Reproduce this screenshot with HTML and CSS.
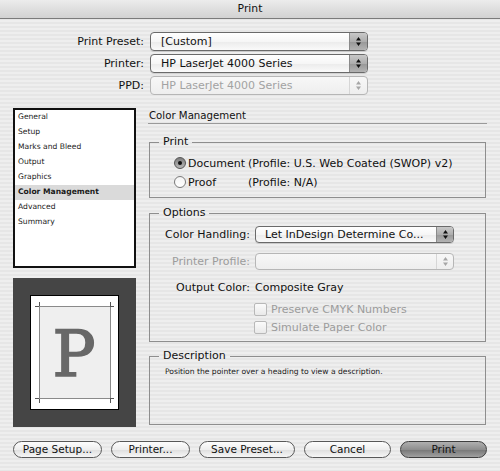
FILE: index.html
```html
<!DOCTYPE html>
<html>
<head>
<meta charset="utf-8">
<link rel="stylesheet" href="styles.css">
</head>
<body>
<div class="titlebar">Print</div>

<div class="presets">
  <div class="plabel">Print Preset:</div>
  <div class="select"><span class="sel-text">[Custom]</span><span class="sel-arrows"><svg class="arr" viewBox="0 0 5 9"><path d="M2.5 0 L5 3.5 L0 3.5Z M0 5.5 L5 5.5 L2.5 9Z"/></svg></span></div>
  <div class="plabel">Printer:</div>
  <div class="select"><span class="sel-text">HP LaserJet 4000 Series</span><span class="sel-arrows"><svg class="arr" viewBox="0 0 5 9"><path d="M2.5 0 L5 3.5 L0 3.5Z M0 5.5 L5 5.5 L2.5 9Z"/></svg></span></div>
  <div class="plabel">PPD:</div>
  <div class="select disabled"><span class="sel-text">HP LaserJet 4000 Series</span><span class="sel-arrows"><svg class="arr" viewBox="0 0 5 9"><path d="M2.5 0 L5 3.5 L0 3.5Z M0 5.5 L5 5.5 L2.5 9Z"/></svg></span></div>
</div>

<div class="main">
  <div class="leftcol">
    <ul class="navlist">
      <li>General</li>
      <li>Setup</li>
      <li>Marks and Bleed</li>
      <li>Output</li>
      <li>Graphics</li>
      <li class="active">Color Management</li>
      <li>Advanced</li>
      <li>Summary</li>
    </ul>
    <div class="preview">
      <svg class="preview-svg" viewBox="0 0 123 149" width="123" height="149">
        <rect class="pg" x="17.5" y="17.5" width="88" height="114"/>
        <rect class="pg-margin" x="26.5" y="28.5" width="71" height="92"/>
        <path class="crop" d="M22 28.5 H26 M26.5 24 V28 M97 28.5 H101 M97.5 24 V28 M22 120.5 H26 M26.5 121 V125 M97 120.5 H101 M97.5 121 V125"/>
        <text class="bigp" x="61" y="98">P</text>
      </svg>
    </div>
  </div>

  <div class="rightcol">
    <div class="heading">Color Management</div>

    <fieldset class="group g-print">
      <legend>Print</legend>
      <div class="radios">
        <span class="radio on"></span><span>Document</span><span>(Profile: U.S. Web Coated (SWOP) v2)</span>
        <span class="radio"></span><span>Proof</span><span>(Profile: N/A)</span>
      </div>
    </fieldset>

    <fieldset class="group g-options">
      <legend>Options</legend>
      <div class="optrow r1">
        <span class="olabel">Color Handling:</span>
        <div class="select small"><span class="sel-text">Let InDesign Determine Co...</span><span class="sel-arrows"><svg class="arr" viewBox="0 0 5 9"><path d="M2.5 0 L5 3.5 L0 3.5Z M0 5.5 L5 5.5 L2.5 9Z"/></svg></span></div>
      </div>
      <div class="optrow r2">
        <span class="olabel dim">Printer Profile:</span>
        <div class="select small disabled"><span class="sel-text"></span><span class="sel-arrows"><svg class="arr" viewBox="0 0 5 9"><path d="M2.5 0 L5 3.5 L0 3.5Z M0 5.5 L5 5.5 L2.5 9Z"/></svg></span></div>
      </div>
      <div class="optrow r3">
        <span class="olabel">Output Color:</span>
        <span class="oval">Composite Gray</span>
      </div>
      <div class="checkrow c1"><span class="check"></span><span class="dim">Preserve CMYK Numbers</span></div>
      <div class="checkrow c2"><span class="check"></span><span class="dim">Simulate Paper Color</span></div>
    </fieldset>

    <fieldset class="group g-desc">
      <legend class="desc-legend">Description</legend>
      <div class="desc-text">Position the pointer over a heading to view a description.</div>
    </fieldset>
  </div>
</div>

<div class="buttons">
  <div class="btn b-setup">Page Setup...</div>
  <div class="btn b-printer">Printer...</div>
  <div class="btn b-save">Save Preset...</div>
  <div class="btn b-cancel">Cancel</div>
  <div class="btn b-print default">Print</div>
</div>
</body>
</html>
```

FILE: styles.css
```css
* { box-sizing: border-box; }
html, body { margin: 0; padding: 0; }
body {
  width: 500px;
  height: 471px;
  overflow: hidden;
  font-family: "DejaVu Sans", "Liberation Sans", sans-serif;
  font-size: 11px;
  color: #111;
  background: repeating-linear-gradient(to bottom, #eeeeee 0, #eeeeee 2px, #e6e6e6 2px, #e6e6e6 4px);
}

.titlebar {
  height: 19px;
  line-height: 18px;
  text-align: center;
  font-size: 10.8px;
  background: linear-gradient(#ececec, #d2d2d2);
  border-bottom: 1px solid #7b7b7b;
}

.presets {
  display: grid;
  grid-template-columns: 144px 218px;
  column-gap: 6px;
  row-gap: 3px;
  padding-top: 13px;
}
.plabel { text-align: right; line-height: 19px; }

.select {
  display: flex;
  height: 19px;
  border: 1px solid #6a6a6a;
  border-radius: 4px;
  overflow: hidden;
  background: linear-gradient(#ffffff, #f6f6f6 50%, #ebebeb 51%, #fafafa);
  box-shadow: 0 1px 0 rgba(0,0,0,0.12);
}
.sel-text {
  flex: 1;
  padding-left: 10px;
  line-height: 17px;
  white-space: nowrap;
  overflow: hidden;
}
.sel-arrows {
  width: 18px;
  display: flex;
  align-items: center;
  justify-content: center;
  background: linear-gradient(#c8c8c8, #adadad 50%, #979797 51%, #b3b3b3);
  border-left: 1px solid #8a8a8a;
}
.arr { width: 5px; height: 9px; fill: #111; }
.select.disabled { border-color: #b6b6b6; color: #a2a2a2; box-shadow: none; background: linear-gradient(#f7f7f7, #eeeeee); }
.select.disabled .sel-arrows { background: transparent; border-left-color: #d6d6d6; }
.select.disabled .arr { fill: #a6a6a6; }
.select.small { height: 17px; }
.select.small .sel-text { line-height: 15px; padding-left: 9px; }
.select.small .sel-arrows { width: 17px; }

.main { display: flex; margin-top: 13px; }

.leftcol {
  width: 123px;
  margin-left: 13px;
  display: flex;
  flex-direction: column;
  gap: 10px;
}
.navlist {
  list-style: none;
  margin: 0;
  padding: 0;
  height: 160px;
  background: #ffffff;
  border: 2px solid #111;
}
.navlist li {
  height: 15px;
  line-height: 14px;
  padding-left: 3px;
  font-size: 7.6px;
  color: #1a1a1a;
}
.navlist li.active { background: #dadada; font-weight: bold; }

.preview { height: 149px; background: #454545; }
.preview-svg { display: block; }
.pg { fill: #ffffff; stroke: #000; stroke-width: 1; }
.pg-margin { fill: #efefef; stroke: #8a8a8a; stroke-width: 1; }
.crop { stroke: #555; stroke-width: 1; fill: none; }
.bigp {
  font-family: "DejaVu Serif", "Liberation Serif", serif;
  font-size: 64px;
  fill: #686868;
  stroke: #686868;
  stroke-width: 1.6px;
  text-anchor: middle;
}

.rightcol { width: 339px; margin-left: 12px; }
.heading {
  padding-top: 1px;
  padding-left: 1px;
  line-height: 14px;
  font-size: 10.2px;
  border-bottom: 1px solid #9a9a9a;
}

.group {
  margin: 0 0 0 1px;
  padding: 0;
  width: 337px;
  min-inline-size: 0;
  border: 1px solid #8e8e8e;
}
.group legend {
  padding: 0 4px;
  margin-left: 9px;
  line-height: 14px;
  font-size: 11px;
}

.g-print { margin-top: 11px; }
.radios {
  display: grid;
  grid-template-columns: 14px 60px auto;
  grid-auto-rows: 16px;
  row-gap: 3px;
  align-items: center;
  padding: 6px 0 7px 24px;
}
.radio {
  width: 12px;
  height: 12px;
  border-radius: 50%;
  border: 1px solid #7a7a7a;
  background: linear-gradient(#f4f4f4, #ffffff);
  display: flex;
  align-items: center;
  justify-content: center;
}
.radio.on { background: linear-gradient(#7c7c7c, #b9b9b9); border-color: #555; }
.radio.on::after {
  content: "";
  width: 4px;
  height: 4px;
  border-radius: 50%;
  background: #111;
}

.g-options { margin-top: 8px; padding-bottom: 7px; }
.optrow {
  display: grid;
  grid-template-columns: 100px 199px;
  column-gap: 5px;
  align-items: center;
}
.olabel { text-align: right; }
.dim { color: #9c9c9c; }
.r1 { margin-top: 6px; height: 17px; }
.r2 { margin-top: 10px; height: 17px; }
.r3 { margin-top: 11px; height: 14px; line-height: 14px; }
.checkrow {
  display: flex;
  align-items: center;
  gap: 4px;
  height: 13px;
  padding-left: 104px;
}
.c1 { margin-top: 8px; }
.c2 { margin-top: 5px; }
.check {
  width: 13px;
  height: 13px;
  border: 1px solid #b8b8b8;
  border-radius: 2px;
  background: linear-gradient(#fbfbfb, #e9e9e9);
}

.g-desc { margin-top: 7px; }
.desc-text {
  height: 61px;
  padding: 4px 0 0 15px;
  font-size: 7.6px;
  line-height: 10px;
  color: #1a1a1a;
}

.buttons {
  display: flex;
  gap: 9px;
  margin: 14px 0 0 13px;
}
.btn {
  height: 17px;
  border: 1px solid #585858;
  border-radius: 9px;
  background: linear-gradient(#fdfdfd, #eeeeee 50%, #dedede 51%, #f6f6f6);
  font-size: 10.5px;
  line-height: 15px;
  text-align: center;
  white-space: nowrap;
}
.b-setup { width: 89px; }
.b-printer { width: 79px; }
.b-save { width: 96px; }
.b-cancel { width: 87px; }
.b-print { width: 87px; }
.btn.default {
  background: linear-gradient(#b0b0b0, #8e8e8e 50%, #767676 51%, #a0a0a0);
  border-color: #3f3f3f;
}
```
